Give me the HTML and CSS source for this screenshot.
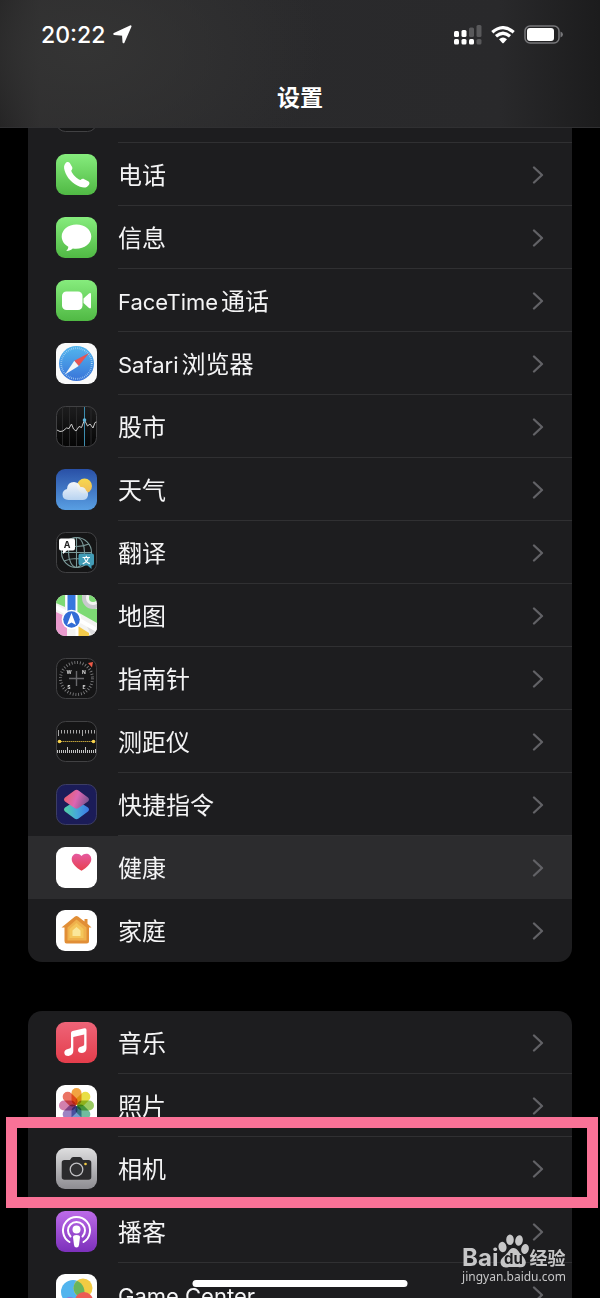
FILE: index.html
```html
<!DOCTYPE html>
<html lang="zh-CN">
<head>
<meta charset="utf-8">
<meta name="viewport" content="width=device-width, initial-scale=1">
<title>设置</title>
<link rel="stylesheet" href="styles.css">
</head>
<body>
<svg class="defs" width="0" height="0" aria-hidden="true">
  <defs>
    <linearGradient id="green" x1="0" y1="0" x2="0" y2="1"><stop offset="0" stop-color="#86ec7d"/><stop offset="1" stop-color="#50b944"/></linearGradient>
    <linearGradient id="safari" x1="0" y1="0" x2="0" y2="1"><stop offset="0" stop-color="#53b6ee"/><stop offset="1" stop-color="#3973d9"/></linearGradient>
    <linearGradient id="sky" x1="0" y1="0" x2="0" y2="1"><stop offset="0" stop-color="#2950a6"/><stop offset="1" stop-color="#599fe3"/></linearGradient>
    <linearGradient id="cloud" x1="0" y1="0" x2="0" y2="1"><stop offset="0" stop-color="#ffffff"/><stop offset="1" stop-color="#bfd8f2"/></linearGradient>
    <linearGradient id="sun" x1="0" y1="0" x2="0" y2="1"><stop offset="0" stop-color="#f8d94e"/><stop offset="1" stop-color="#eeb958"/></linearGradient>
    <linearGradient id="dark" x1="0" y1="0" x2="0" y2="1"><stop offset="0" stop-color="#1d1d1e"/><stop offset="1" stop-color="#050505"/></linearGradient>
    <linearGradient id="cutTop" x1="0" y1=".3" x2="1" y2=".6"><stop offset="0" stop-color="#e95e68"/><stop offset=".5" stop-color="#dc66b2"/><stop offset="1" stop-color="#76538f"/></linearGradient>
    <linearGradient id="cutBottom" x1="0" y1="0" x2="1" y2="0"><stop offset="0" stop-color="#52d0a4"/><stop offset=".5" stop-color="#46a9d8"/><stop offset="1" stop-color="#3b78e6"/></linearGradient>
    <linearGradient id="heart" x1="0" y1="0" x2="0" y2="1"><stop offset="0" stop-color="#e55aa0"/><stop offset="1" stop-color="#e8404e"/></linearGradient>
    <linearGradient id="music" x1="0" y1="0" x2="0" y2="1"><stop offset="0" stop-color="#ee6478"/><stop offset="1" stop-color="#e43d4b"/></linearGradient>
    <linearGradient id="silver" x1="0" y1="0" x2="0" y2="1"><stop offset="0" stop-color="#dededf"/><stop offset="1" stop-color="#8d8c91"/></linearGradient>
    <linearGradient id="purple" x1="0" y1="0" x2="0" y2="1"><stop offset="0" stop-color="#bd6be9"/><stop offset="1" stop-color="#7c30bb"/></linearGradient>
    <clipPath id="tile"><rect width="41" height="41" rx="9"/></clipPath>
    <symbol id="chevron" viewBox="0 0 12 18"><path d="M2 1.500 10 9 2 16.500" fill="none" stroke="#626266" stroke-width="2.300" stroke-linecap="round" stroke-linejoin="round"/></symbol>
  </defs>
</svg>

<div class="screen">
  <header class="top">
    <div class="status">
      <div class="clock"><span>20:22</span>
        <svg width="19" height="19" viewBox="0 0 19 19" aria-hidden="true"><path d="M17.500 1.300 10.500 17.300 10 9.800 1.300 9Z" fill="#fff" stroke="#fff" stroke-width="2" stroke-linejoin="round"/></svg>
      </div>
      <div class="signals" aria-hidden="true">
        <svg width="28" height="20" viewBox="0 0 28 20"><g fill="#fff"><rect y="6" width="5" height="6" rx="1.500"/><rect x="7.500" y="5" width="5" height="7" rx="1.500"/><rect y="14" width="5" height="5.500" rx="1.500"/><rect x="7.500" y="14" width="5" height="5.500" rx="1.500"/><rect x="15" y="14" width="5" height="5.500" rx="1.500"/></g><g fill="#59595b"><rect x="15" y="2.500" width="5" height="9.500" rx="1.500"/><rect x="22.500" width="5" height="12" rx="1.500"/><rect x="22.500" y="14" width="5" height="5.500" rx="1.500"/></g></svg>
        <svg width="24" height="18" viewBox="0 0 24 18"><g fill="none" stroke="#fff" stroke-width="3.200"><path d="M1.300 6.300Q12-3 22.700 6.300"/><path d="M5 10.300Q12 4.200 19 10.300"/></g><path d="M8 13.200Q12 10 16 13.200L12.700 17Q12 17.700 11.300 17Z" fill="#fff"/></svg>
        <svg width="39" height="19" viewBox="0 0 39 19"><rect x="1" y="1" width="34" height="17" rx="5" fill="none" stroke="#77777a" stroke-width="1.500"/><rect x="3" y="3" width="27" height="13" rx="3" fill="#fff"/><path d="M36.500 6.500Q39 7.500 39 9.500T36.500 12.500Z" fill="#77777a"/></svg>
      </div>
    </div>
    <h1 class="title">设置</h1>
  </header>

  <main class="list">
    <nav class="card card-first">
      <div class="row"><svg class="icon" viewBox="0 0 41 41"><rect class="dark-tile" x=".5" y=".5" width="40" height="40" rx="9"/></svg><span class="label"></span></div>

      <a class="row" href="#phone"><svg class="icon" viewBox="0 0 41 41"><rect width="41" height="41" rx="9" fill="url(#green)"/><path d="M9.500 9.200C10.500 7.800 12.700 7.500 13.800 9L16 12.700C16.800 14.200 16.300 15.300 15.200 16.700C16.500 20.500 20.600 24.500 24.500 26C25.800 24.700 27 24.400 28.300 25.200L32.200 27.300C33.700 28.200 33.800 29.700 32.800 31C31 33.600 28.500 34.300 24 32.800C16.500 30 10.800 23.800 8.600 16.500C7.600 13.200 8 11 9.500 9.200Z" fill="#fff"/></svg><span class="label">电话</span><svg class="chevron"><use href="#chevron"/></svg></a>

      <a class="row" href="#messages"><svg class="icon" viewBox="0 0 41 41"><rect width="41" height="41" rx="9" fill="url(#green)"/><path d="M20.500 7.500C12 7.500 5.700 13 5.700 19.500C5.700 23.800 8.300 27.600 12.300 29.700C12.300 31.500 11.500 32.800 10.200 34C13 33.900 15.200 32.800 16.800 31.500C27 32.900 35.300 27.500 35.300 19.500C35.300 13 29 7.500 20.500 7.500Z" fill="#fff"/></svg><span class="label">信息</span><svg class="chevron"><use href="#chevron"/></svg></a>

      <a class="row" href="#facetime"><svg class="icon" viewBox="0 0 41 41"><rect width="41" height="41" rx="9" fill="url(#green)"/><rect x="6" y="11.500" width="20.500" height="18.500" rx="4.500" fill="#fff"/><path d="M27.500 18.500 33 13.500Q35 12.200 35 14.500V27Q35 29.300 33 28L27.500 23Z" fill="#fff"/></svg><span class="label"><span class="latin">FaceTime</span><span class="cjk">通话</span></span><svg class="chevron"><use href="#chevron"/></svg></a>

      <a class="row" href="#safari-app"><svg class="icon" viewBox="0 0 41 41"><rect width="41" height="41" rx="9" fill="#fafafa"/><circle cx="20.500" cy="20.500" r="17.500" fill="url(#safari)"/><circle cx="20.500" cy="20.500" r="15.300" fill="none" stroke="#b5dbf5" stroke-width="1.800" stroke-dasharray=".6 1.300"/><path d="M33 10 18.300 17.700 22.700 23Z" fill="#e85454"/><path d="M9 31.500 18.300 17.700 22.700 23Z" fill="#f4f6f8"/></svg><span class="label"><span class="latin">Safari</span><span class="cjk">浏览器</span></span><svg class="chevron"><use href="#chevron"/></svg></a>

      <a class="row" href="#stocks"><svg class="icon" viewBox="0 0 41 41"><rect x=".5" y=".5" width="40" height="40" rx="9" fill="url(#dark)" stroke="#414143"/><path d="M6.500 1V40M13.500 1V40M20.500 1V40M35 1V40" stroke="#29292a"/><path d="M1 24 4 25.500 7 25 10.500 22 13 22.500 15.500 18 17.500 23 20 25 23 20.500 25.500 21.500 28.500 14 31.500 20 34 18 37 22 39 16.500 40.500 16" fill="none" stroke="#c9c9c9" stroke-width="1"/><path d="M28.500 1V40" stroke="#3c8cae" stroke-width="1"/><circle cx="28.500" cy="14" r="1.800" fill="#62b7dc"/></svg><span class="label">股市</span><svg class="chevron"><use href="#chevron"/></svg></a>

      <a class="row" href="#weather"><svg class="icon" viewBox="0 0 41 41"><rect width="41" height="41" rx="9" fill="url(#sky)"/><circle cx="28.500" cy="17" r="7.500" fill="url(#sun)"/><path d="M12.500 31Q6.500 30.500 6.500 25.500Q6.500 21 11 20Q11.500 13 18 13Q22.500 13.200 24.500 18Q29 17.500 30 21.500Q32.500 23 32 26.500Q31 31 26.500 31Z" fill="url(#cloud)" opacity=".94"/></svg><span class="label">天气</span><svg class="chevron"><use href="#chevron"/></svg></a>

      <a class="row" href="#translate"><svg class="icon" viewBox="0 0 41 41"><rect class="dark-tile" x=".5" y=".5" width="40" height="40" rx="9"/><g fill="none" stroke="#7b9999" stroke-width="1.100"><circle cx="20.500" cy="20.500" r="15"/><ellipse cx="20.500" cy="20.500" rx="8" ry="15"/><path d="M20.500 5V36M5.500 20.500H35.500M8 12Q20.500 17 33 12M8 29Q20.500 24 33 29"/></g><path d="M5 6.500H17Q19 6.500 19 8.500V16.500Q19 18.500 17 18.500H11L7 22V18.500H5Q3 18.500 3 16.500V8.500Q3 6.500 5 6.500Z" fill="#fff"/><text x="11" y="15.500" class="tiny-a">A</text><path d="M24.500 21.500H36Q38 21.500 38 23.500V31.500Q38 33.500 36 33.500H35.500V37L31.500 33.500H24.500Q22.500 33.500 22.500 31.500V23.500Q22.500 21.500 24.500 21.500Z" fill="#429cb6"/><text x="30.200" y="30.700" class="tiny-wen">文</text></svg><span class="label">翻译</span><svg class="chevron"><use href="#chevron"/></svg></a>

      <a class="row" href="#maps"><svg class="icon" viewBox="0 0 41 41"><g clip-path="url(#tile)"><rect width="41" height="41" fill="#f3f3f1"/><path d="M0 0H9V12L0 8Z" fill="#7dda74"/><path d="M21.500 0H26Q29 12 41 14V28L21.500 17Z" fill="#7dda74"/><circle cx="37" cy="3" r="9" fill="none" stroke="#c9c9cd" stroke-width="4"/><circle cx="37" cy="3" r="4" fill="#7dda74"/><path d="M0 17 11 22V41H0Z" fill="#e99acd"/><path d="M22 31 33 38V41H22Z" fill="#f4cb4b"/><path d="M28 26 41 34V41H36Z" fill="#dedee0"/><path d="M0 12 41 35" stroke="#fff" stroke-width="4"/><path d="M21 20V41" stroke="#fff" stroke-width="3"/><path d="M15.500 0V22" stroke="#fff" stroke-width="11"/><path d="M15.500 0V22" stroke="#3677de" stroke-width="8"/><circle cx="15.500" cy="24.500" r="9.800" fill="#fff"/><circle cx="15.500" cy="24.500" r="8.300" fill="#326dd6"/><path d="M15.500 18 20 30 15.500 27.500 11 30Z" fill="#fff"/></g></svg><span class="label">地图</span><svg class="chevron"><use href="#chevron"/></svg></a>

      <a class="row" href="#compass"><svg class="icon" viewBox="0 0 41 41"><rect class="dark-tile" x=".5" y=".5" width="40" height="40" rx="9"/><circle cx="20.500" cy="20.500" r="16" fill="none" stroke="#858587" stroke-width="3" stroke-dasharray=".8 2"/><path d="M13 20.500H28M20.500 13V28" stroke="#68686b" stroke-width="1.400"/><path d="M32 5 37 4 36 9.500Z" fill="#ed5b48"/><g class="compass-letters"><text x="13" y="15.500">W</text><text x="28" y="15.500">N</text><text x="13" y="30.500">S</text><text x="28" y="30.500">E</text></g></svg><span class="label">指南针</span><svg class="chevron"><use href="#chevron"/></svg></a>

      <a class="row" href="#measure"><svg class="icon" viewBox="0 0 41 41"><rect class="dark-tile" x=".5" y=".5" width="40" height="40" rx="9"/><path d="M2.500 9V15M5.500 9V12.500M8.500 9V12.500M11.500 9V12.500M14.500 9V12.500M17.500 9V12.500M20.500 9V12.500M23.500 9V12.500M26.500 9V15M29.500 9V12.500M32.500 9V12.500M35.500 9V12.500M38.500 9V12.500" stroke="#a8a8a8" stroke-width="1"/><path d="M1.500 29V32M3.500 29V32M5.500 29V32M7.500 29V32M9.500 29V32M11.500 26V32M13.500 29V32M15.500 29V32M17.500 29V32M19.500 29V32M21.500 28V32M23.500 29V32M25.500 29V32M27.500 29V32M29.500 26V32M31.500 29V32M33.500 29V32M35.500 29V32M37.500 29V32M39.500 28V32" stroke="#c4c4c4" stroke-width="1"/><path d="M3 20.500H38" stroke="#b99c38" stroke-dasharray="1.500 .5"/><circle cx="3.500" cy="20.500" r="1.800" fill="#f8d34d"/><circle cx="37.500" cy="20.500" r="1.800" fill="#f8d34d"/></svg><span class="label">测距仪</span><svg class="chevron"><use href="#chevron"/></svg></a>

      <a class="row" href="#shortcuts"><svg class="icon" viewBox="0 0 41 41"><rect x=".5" y=".5" width="40" height="40" rx="9" fill="#1b1c58" stroke="#3c3d65"/><path d="M18.500 17.500Q20.500 16.500 22.500 17.500L32 23.500Q34 25.500 32 27.500L22.500 34.500Q20.500 36 18.500 34.500L9 27.500Q7 25.500 9 23.500Z" fill="url(#cutBottom)"/><path d="M18.500 6.500Q20.500 5 22.500 6.500L32 13.500Q34 15.500 32 17.500L22.500 24Q20.500 25.500 18.500 24L9 17.500Q7 15.500 9 13.500Z" fill="url(#cutTop)"/></svg><span class="label">快捷指令</span><svg class="chevron"><use href="#chevron"/></svg></a>

      <a class="row row-active" href="#health"><svg class="icon" viewBox="0 0 41 41"><rect width="41" height="41" rx="9" fill="#fff"/><path d="M25.500 23.700C20 20.500 15.700 16.500 15.700 12C15.700 6.500 22 4.800 25.500 9C29 4.800 35.300 6.500 35.300 12C35.300 16.500 31 20.500 25.500 23.700Z" fill="url(#heart)"/></svg><span class="label">健康</span><svg class="chevron"><use href="#chevron"/></svg></a>

      <a class="row" href="#home"><svg class="icon" viewBox="0 0 41 41"><rect width="41" height="41" rx="9" fill="#fff"/><path d="M5.500 17.500 19 6.500Q20.500 5.300 22 6.500L28.500 11.500V9H31.500V13.700L35.500 17.500H33V31Q33 33.500 30.500 33.500H10.500Q8.500 33.500 8.500 31V17.500Z" fill="#e18e36"/><path d="M20.500 9.500 30.500 17.500V30.500H11.500V17.500Z" fill="#efb14c"/><path d="M20.500 13 27.500 19V28H13.500V19Z" fill="#f4c55a"/><path d="M20.500 17 24.500 20.500V26H16.500V20.500Z" fill="#fae79a"/></svg><span class="label">家庭</span><svg class="chevron"><use href="#chevron"/></svg></a>
    </nav>

    <nav class="card">
      <a class="row" href="#music-app"><svg class="icon" viewBox="0 0 41 41"><rect width="41" height="41" rx="9" fill="url(#music)"/><path d="M15 11Q15 9.300 16.600 9L28.500 6.300Q30.500 5.900 30.500 8V26Q30.500 30.500 26 31Q22 31 22 28Q22 25 25.500 24.500Q28.200 24.200 28.200 22.500V12.500L17.300 15V29Q17.300 33 12.500 34Q8.300 34 8.300 30.500Q8.500 27.500 12 27Q15 26.700 15 25Z" fill="#fff"/></svg><span class="label">音乐</span><svg class="chevron"><use href="#chevron"/></svg></a>

      <a class="row" href="#photos"><svg class="icon" viewBox="0 0 41 41"><rect width="41" height="41" rx="9" fill="#fff"/><g class="petals"><rect x="15.500" y="3" width="10" height="17" rx="5" fill="#f2a341"/><rect x="15.500" y="3" width="10" height="17" rx="5" fill="#e9df46" transform="rotate(45 20.500 20.500)"/><rect x="15.500" y="3" width="10" height="17" rx="5" fill="#9bcb62" transform="rotate(90 20.500 20.500)"/><rect x="15.500" y="3" width="10" height="17" rx="5" fill="#71bd9f" transform="rotate(135 20.500 20.500)"/><rect x="15.500" y="3" width="10" height="17" rx="5" fill="#769bd0" transform="rotate(180 20.500 20.500)"/><rect x="15.500" y="3" width="10" height="17" rx="5" fill="#9d83c2" transform="rotate(225 20.500 20.500)"/><rect x="15.500" y="3" width="10" height="17" rx="5" fill="#d280ad" transform="rotate(270 20.500 20.500)"/><rect x="15.500" y="3" width="10" height="17" rx="5" fill="#eb7464" transform="rotate(315 20.500 20.500)"/></g></svg><span class="label">照片</span><svg class="chevron"><use href="#chevron"/></svg></a>

      <a class="row row-marked" href="#camera"><svg class="icon" viewBox="0 0 41 41"><rect width="41" height="41" rx="9" fill="url(#silver)"/><path d="M8.500 12H14L15.500 9.800Q16.200 9 17.500 9H23.500Q24.800 9 25.500 9.800L27 12H32.500Q35.300 12 35.300 14.700V29Q35.300 31.800 32.500 31.800H8.500Q5.700 31.800 5.700 29V14.700Q5.700 12 8.500 12Z" fill="#2b2b2d"/><circle cx="20.500" cy="21.500" r="6.300" fill="#303032" stroke="#c1c1c4" stroke-width="1.300"/><circle cx="29.500" cy="16" r="1.300" fill="#f3cc45"/></svg><span class="label">相机</span><svg class="chevron"><use href="#chevron"/></svg></a>

      <a class="row" href="#podcasts"><svg class="icon" viewBox="0 0 41 41"><rect width="41" height="41" rx="9" fill="url(#purple)"/><g fill="none" stroke="#fff" stroke-width="2" stroke-linecap="round"><path d="M13.500 31A13.500 13.500 0 1 1 27.500 31"/><path d="M14.500 25.500A8.500 8.500 0 1 1 26.500 25.500"/></g><circle cx="20.500" cy="18.500" r="4" fill="#fff"/><path d="M17 26Q17 24 20.500 24T24 26L23 34Q22.700 36.500 20.500 36.500T18 34Z" fill="#fff"/></svg><span class="label">播客</span><svg class="chevron"><use href="#chevron"/></svg></a>

      <a class="row" href="#game-center"><svg class="icon" viewBox="0 0 41 41"><rect width="41" height="41" rx="9" fill="#fff"/><circle cx="17" cy="18" r="12" fill="#52b4ee"/><circle cx="27" cy="14" r="9.500" fill="#f3cb43"/><path d="M18.500 10A9.500 9.500 0 0 0 27 23.500A12 12 0 0 0 21 6.700Z" fill="#69b55d"/><circle cx="28" cy="27" r="9" fill="#ec5b55"/><circle cx="14" cy="30" r="7" fill="#9670d4"/></svg><span class="label"><span class="latin">Game Center</span></span><svg class="chevron"><use href="#chevron"/></svg></a>
    </nav>
  </main>

  <div class="watermark">
    <div class="brand"><span class="brand-bai">Bai</span>
      <svg width="31" height="34" viewBox="0 0 31 34" aria-hidden="true"><g fill="#c6c6c7"><ellipse cx="4.500" cy="13" rx="4" ry="5.200" transform="rotate(-12 4.500 13)"/><ellipse cx="12" cy="5.700" rx="3.800" ry="5.300"/><ellipse cx="21" cy="6.500" rx="3.800" ry="5.300" transform="rotate(12 21 6.500)"/><ellipse cx="27" cy="15" rx="3.800" ry="5" transform="rotate(12 27 15)"/><path d="M15.500 14C19.500 14 20.500 18 23.500 21C27 24.500 29.500 28.500 26.500 32Q24.500 34 20 33H11Q5.500 34.500 3.500 31.500C1 27.500 3.500 24 7.500 21C10.500 18 11.500 14 15.500 14Z"/></g><text x="15.500" y="30" class="paw-text">du</text></svg>
      <span class="brand-cn">经验</span></div>
    <div class="brand-url">jingyan.baidu.com</div>
  </div>
  <div class="home-bar"></div>
</div>
</body>
</html>
```
FILE: styles.css
```css
* { box-sizing: border-box; }

body {
  margin: 0;
  background: #000;
  color: #fff;
  font-family: Inter, "Noto Sans CJK SC", sans-serif;
}

.defs { position: absolute; }

.screen {
  position: relative;
  height: 100vh;
  overflow: hidden;
}

.top {
  position: relative;
  z-index: 1;
  height: 128px;
  border-bottom: 1px solid #303032;
  background:
    radial-gradient(ellipse 240px 150px at 84px 50px, #343434, transparent),
    linear-gradient(90deg, #1c1b1c 0, #2d2c2d 40px, #2a2a2c 220px, #29292b 500px, #1c1c1d 100%);
}

.status {
  display: flex;
  align-items: center;
  justify-content: space-between;
  height: 69px;
  padding: 0 37px 0 41px;
}

.clock {
  display: flex;
  align-items: center;
  gap: 8px;
  font-size: 23px;
  font-weight: 500;
}

.signals {
  display: flex;
  align-items: center;
  gap: 9px;
}

.title {
  margin: 14px 0 0;
  font-size: 23px;
  line-height: 30px;
  font-weight: 700;
  text-align: center;
}

.list {
  display: flex;
  flex-direction: column;
  gap: 49px;
  margin-top: -48px;
  padding: 0 28px;
}

.card {
  border-radius: 14px;
  background: #1d1d1f;
}

.row {
  position: relative;
  display: flex;
  align-items: center;
  height: 63px;
  padding-left: 28px;
  color: #f4f4f5;
  text-decoration: none;
}

.row::after {
  content: "";
  position: absolute;
  right: 0;
  bottom: 0;
  left: 90px;
  height: 1px;
  background: #303032;
}

.row:last-child::after,
.row-active::after { display: none; }

.row-active { background: #2c2c2e; }

.row-marked::before {
  content: "";
  position: absolute;
  z-index: 2;
  inset: -20px -26px -8px -22px;
  border: 11px solid #f97297;
}

.icon {
  flex: none;
  width: 41px;
  height: 41px;
}

.label {
  flex: 1;
  margin-left: 21px;
  padding-top: 2px;
  font-size: 24px;
  line-height: 32px;
}

.latin { font-size: 22px; }

.cjk { margin-left: 3px; }

.chevron {
  flex: none;
  width: 12px;
  height: 18px;
  margin-right: 28px;
}

.dark-tile { fill: #151516; stroke: #414143; }

.tiny-a,
.tiny-wen,
.compass-letters,
.paw-text {
  text-anchor: middle;
  font-weight: 700;
}

.tiny-a { font-size: 9px; fill: #222; }
.tiny-wen { font-size: 8px; fill: #fff; }
.compass-letters { font-size: 5px; fill: #ddd; }
.paw-text { font-size: 15px; fill: #1d1d1f; }
.petals rect { mix-blend-mode: multiply; }

.watermark {
  position: absolute;
  right: 34px;
  bottom: 12px;
  color: #c6c6c7;
}

.brand {
  display: flex;
  align-items: flex-end;
  height: 34px;
}

.brand-bai {
  font-size: 24px;
  line-height: 20px;
  font-weight: 700;
}

.brand-cn {
  font-size: 18px;
  line-height: 18px;
  font-weight: 700;
}

.brand-url {
  font-family: "Noto Sans", sans-serif;
  font-size: 12px;
  line-height: 18px;
}

.home-bar {
  position: absolute;
  z-index: 3;
  bottom: 11px;
  left: 50%;
  width: 215px;
  height: 7px;
  border-radius: 4px;
  background: #fff;
  transform: translateX(-50%);
}
```
